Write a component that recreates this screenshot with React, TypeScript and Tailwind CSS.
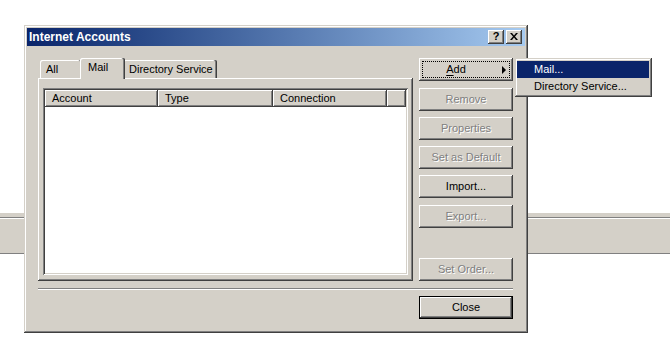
import React from "react";

const raised =
  "shadow-[inset_-1px_-1px_#404040,inset_1px_1px_#ffffff,inset_-2px_-2px_#808080,inset_2px_2px_#d4d0c8]";
const disabledText = "text-[#808080] [text-shadow:1px_1px_0_#ffffff]";

function Btn({
  children,
  disabled,
  className = "",
}: {
  children: React.ReactNode;
  disabled?: boolean;
  className?: string;
}) {
  return (
    <div
      className={`w-[94px] h-[23px] shrink-0 bg-[#d4d0c8] flex items-center justify-center text-[11px] leading-none ${raised} ${
        disabled ? disabledText : "text-black"
      } ${className}`}
    >
      {children}
    </div>
  );
}

function Tab({
  label,
  selected,
  width,
}: {
  label: string;
  selected?: boolean;
  width: string;
}) {
  if (selected) {
    return (
      <div
        className={`relative z-10 -mx-[2px] -mb-[1px] h-[21px] ${width} bg-[#d4d0c8] pl-[8px] pt-[3px] text-[11px] leading-[13px] rounded-tl-[2px] rounded-tr-[2px] shadow-[inset_-1px_0_#404040,inset_-2px_0_#808080,inset_1px_1px_#ffffff]`}
      >
        {label}
      </div>
    );
  }
  return (
    <div
      className={`h-[18px] ${width} bg-[#d4d0c8] pl-[6px] pt-[3px] text-[11px] leading-[13px] rounded-tl-[2px] rounded-tr-[2px] shadow-[inset_-1px_0_#404040,inset_-2px_0_#808080,inset_1px_1px_#ffffff]`}
    >
      {label}
    </div>
  );
}

function HeaderCell({ label, width }: { label: string; width: string }) {
  return (
    <div
      className={`h-[17px] ${width} bg-[#d4d0c8] pl-[7px] flex items-center text-[11px] leading-none shadow-[inset_-1px_-1px_#404040,inset_1px_1px_#ffffff,inset_-2px_-2px_#808080]`}
    >
      {label}
    </div>
  );
}

export default function App() {
  return (
    <div className="relative w-[670px] h-[358px] bg-white overflow-hidden font-['Liberation_Sans',Arial,sans-serif] text-black">
      {/* desktop bar behind the dialog */}
      <div className="absolute left-0 right-0 top-[213px] h-[41px] bg-[#d4d0c8] border-b border-[#808080]">
        <div className="mt-[4px] h-[2px] border-t border-[#808080] border-b border-b-white" />
      </div>

      {/* dialog window */}
      <div className="absolute left-[24px] top-[25px] w-[504px] h-[308px] bg-[#d4d0c8] p-[3px] flex flex-col shadow-[inset_-1px_-1px_#404040,inset_1px_1px_#d4d0c8,inset_-2px_-2px_#808080,inset_2px_2px_#ffffff]">
        {/* title bar */}
        <div className="h-[18px] shrink-0 flex items-center pl-[2px] pr-[3px] bg-gradient-to-r from-[#0a246a] to-[#a6caf0]">
          <span className="flex-1 text-white font-bold text-[12px] leading-none">
            Internet Accounts
          </span>
          <div
            className={`w-[16px] h-[14px] bg-[#d4d0c8] flex items-center justify-center text-[11px] font-bold leading-none ${raised}`}
          >
            <span className="-mt-[1px]">?</span>
          </div>
          <div
            className={`ml-[2px] w-[16px] h-[14px] bg-[#d4d0c8] flex items-center justify-center ${raised}`}
          >
            <svg width="8" height="7" viewBox="0 0 8 7" className="-mt-[1px]">
              <path
                d="M0 0h2l2 2.5L6 0h2L5 3.5 8 7H6L4 4.5 2 7H0l3-3.5z"
                fill="#000"
              />
            </svg>
          </div>
        </div>

        {/* body */}
        <div className="flex-1 flex flex-col pl-[11px] pr-[12px] pt-[12px]">
          <div className="flex gap-[6px] h-[223px]">
            {/* tab control */}
            <div className="w-[375px] flex flex-col">
              <div className="h-[20px] flex items-end pl-[2px]">
                <Tab label="All" width="w-[42px]" />
                <Tab label="Mail" selected width="w-[45px]" />
                <Tab label="Directory Service" width="w-[94px]" />
              </div>
              <div className="flex-1 pt-[10px] pl-[5px] pr-[5px] pb-[6px] shadow-[inset_-1px_-1px_#404040,inset_1px_1px_#ffffff,inset_-2px_-2px_#808080]">
                <div className="h-full bg-white p-[2px] shadow-[inset_1px_1px_#808080,inset_-1px_-1px_#ffffff,inset_2px_2px_#404040,inset_-2px_-2px_#d4d0c8]">
                  <div className="flex">
                    <HeaderCell label="Account" width="w-[113px]" />
                    <HeaderCell label="Type" width="w-[115px]" />
                    <HeaderCell label="Connection" width="w-[114px]" />
                    <HeaderCell label="" width="flex-1" />
                  </div>
                </div>
              </div>
            </div>

            {/* button column */}
            <div className="w-[94px] flex flex-col">
              <div
                className={`relative w-[94px] h-[23px] shrink-0 bg-[#d4d0c8] flex items-center justify-center pr-[20px] text-[11px] leading-none ${raised}`}
              >
                <span>
                  <span className="underline underline-offset-[2px]">A</span>dd
                </span>
                <div className="absolute right-[7px] top-[8px] w-0 h-0 border-y-[4px] border-y-transparent border-l-[4px] border-l-black" />
                <div className="absolute inset-[3px] border border-dotted border-black" />
              </div>
              <Btn disabled className="mt-[7px]">Remove</Btn>
              <Btn disabled className="mt-[6px]">Properties</Btn>
              <Btn disabled className="mt-[6px]">Set as Default</Btn>
              <Btn className="mt-[6px]">Import...</Btn>
              <Btn disabled className="mt-[7px]">Export...</Btn>
              <Btn disabled className="mt-auto">Set Order...</Btn>
            </div>
          </div>

          {/* separator */}
          <div className="mt-[7px] h-[2px] w-[475px] border-t border-[#808080] border-b border-b-white" />

          {/* close row */}
          <div className="mt-[6px] flex justify-end">
            <div className="w-[94px] h-[23px] border border-black bg-[#d4d0c8] flex items-center justify-center text-[11px] leading-none shadow-[inset_-1px_-1px_#404040,inset_1px_1px_#ffffff,inset_-2px_-2px_#808080,inset_2px_2px_#d4d0c8]">
              Close
            </div>
          </div>
        </div>
      </div>

      {/* popup menu */}
      <div className="absolute left-[515px] top-[58px] w-[137px] h-[39px] bg-[#d4d0c8] pt-[3px] pl-[2px] pr-[3px] shadow-[inset_-1px_-1px_#404040,inset_1px_1px_#d4d0c8,inset_-2px_-2px_#808080,inset_2px_2px_#ffffff]">
        <div className="h-[17px] bg-[#0a246a] text-white text-[11px] leading-none flex items-center pl-[17px]">
          Mail...
        </div>
        <div className="h-[17px] text-black text-[11px] leading-none flex items-center pl-[17px]">
          Directory Service...
        </div>
      </div>
    </div>
  );
}
